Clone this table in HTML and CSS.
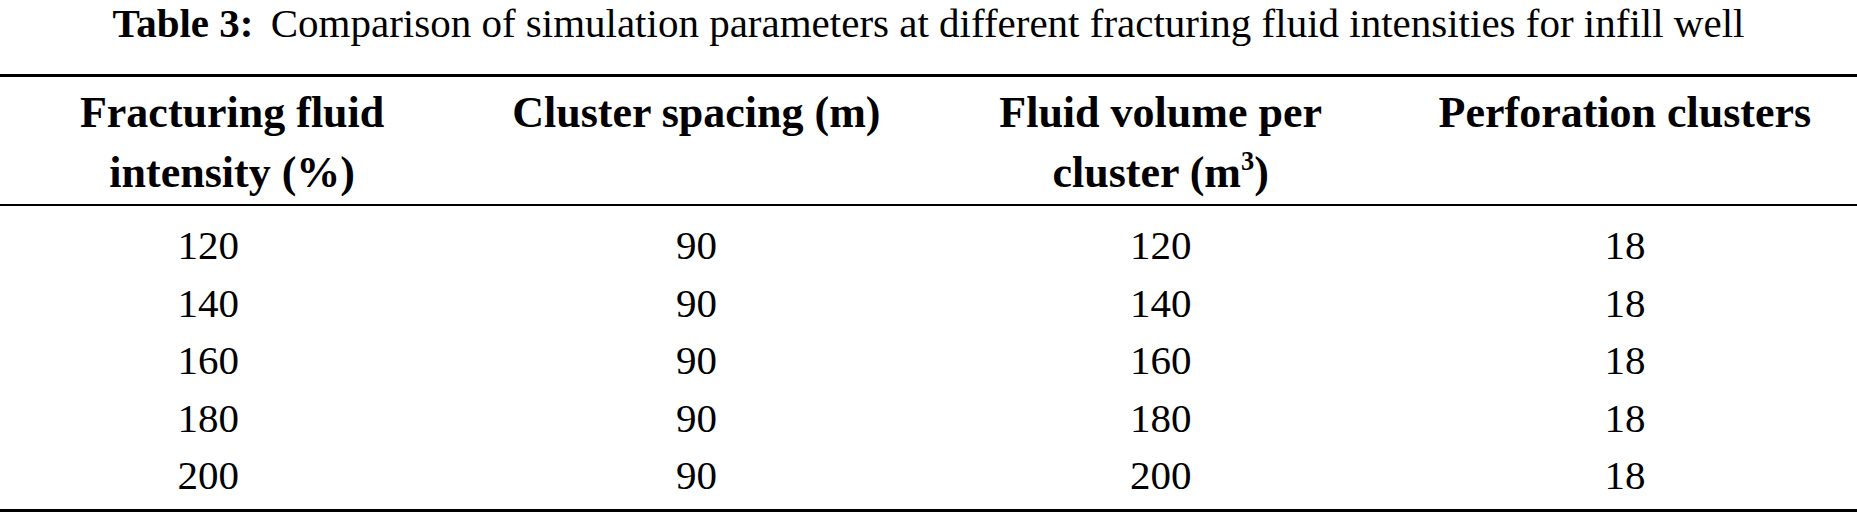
FILE: index.html
```html
<!DOCTYPE html>
<html lang="en">
<head>
<meta charset="utf-8">
<title>Table 3</title>
<link rel="stylesheet" href="styles.css">
</head>
<body>
<div class="wrap">
  <p class="caption"><span class="label">Table 3:</span> Comparison of simulation parameters at different fracturing fluid intensities for infill well</p>
  <div class="table">
    <div class="head">
      <div class="cell">Fracturing fluid<br>intensity (%)</div>
      <div class="cell">Cluster spacing (m)</div>
      <div class="cell">Fluid volume per<br>cluster (m<sup>3</sup>)</div>
      <div class="cell">Perforation clusters</div>
    </div>
    <div class="body">
      <div class="cell first">120</div><div class="cell">90</div><div class="cell">120</div><div class="cell">18</div>
      <div class="cell first">140</div><div class="cell">90</div><div class="cell">140</div><div class="cell">18</div>
      <div class="cell first">160</div><div class="cell">90</div><div class="cell">160</div><div class="cell">18</div>
      <div class="cell first">180</div><div class="cell">90</div><div class="cell">180</div><div class="cell">18</div>
      <div class="cell first">200</div><div class="cell">90</div><div class="cell">200</div><div class="cell">18</div>
    </div>
  </div>
</div>
</body>
</html>
```

FILE: styles.css
```css
html, body {
  margin: 0;
  padding: 0;
  background: #ffffff;
}

body {
  font-family: "Liberation Serif", "Times New Roman", serif;
  color: #000000;
  width: 1857px;
  height: 515px;
  overflow: hidden;
}

.wrap {
  display: flex;
  flex-direction: column;
}

.caption {
  margin: 0 0 28px 0;
  font-size: 41px;
  line-height: 46px;
  text-align: center;
  white-space: nowrap;
}

.label {
  font-weight: bold;
  margin-right: 7px;
}

.table {
  border-top: 3px solid #000;
  border-bottom: 3px solid #000;
}

.head {
  display: grid;
  grid-template-columns: repeat(4, 1fr);
  padding: 6px 0 1px 0;
  border-bottom: 2px solid #000;
  font-weight: bold;
  font-size: 44px;
  line-height: 60px;
}

.body {
  display: grid;
  grid-template-columns: repeat(4, 1fr);
  padding: 11px 0 4px 0;
  font-size: 41px;
  line-height: 57.5px;
}

.cell {
  text-align: center;
}

.body .first {
  padding-right: 48px;
}

sup {
  font-size: 0.6em;
  line-height: 0;
  vertical-align: 0.65em;
}
```
